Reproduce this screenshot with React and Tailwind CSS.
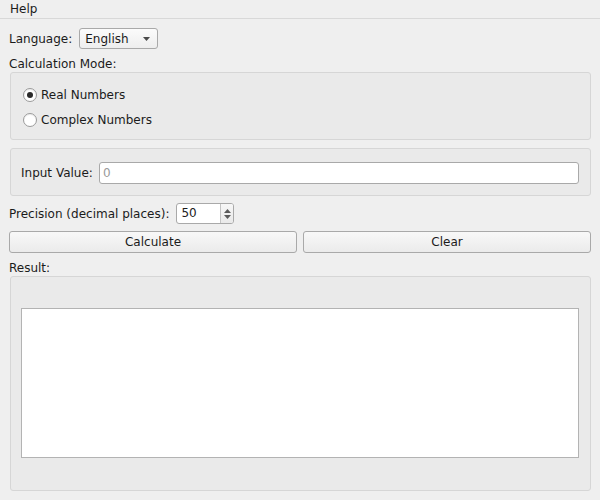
import React, { useState } from "react";

const Radio = ({ checked, label, onClick }) => (
  <div className="flex items-center h-[20px] cursor-default" onClick={onClick}>
    <span className="w-[14px] h-[14px] rounded-full border border-[#9a9a9a] bg-white flex items-center justify-center shadow-[inset_0_1px_1px_rgba(0,0,0,0.08)]">
      {checked && <span className="w-[6px] h-[6px] rounded-full bg-[#2b2b2b]" />}
    </span>
    <span className="ml-[4px]">{label}</span>
  </div>
);

const Group = ({ className = "", children }) => (
  <div className={`ml-[1px] w-[581px] rounded-[3px] border border-[#d6d6d6] bg-[#eaeaea] ${className}`}>
    {children}
  </div>
);

const Button = ({ children, onClick }) => (
  <button
    onClick={onClick}
    className="flex-1 h-[22px] rounded-[3px] border border-[#a9a9a9] bg-gradient-to-b from-[#f8f8f8] to-[#ebebeb] text-[12px] leading-[20px] text-[#1b1b1b]"
  >
    {children}
  </button>
);

export default function App() {
  const [mode, setMode] = useState("real");
  const [value, setValue] = useState("");
  const [precision, setPrecision] = useState(50);
  const [result, setResult] = useState("");

  return (
    <div className="w-[600px] h-[500px] bg-[#efefef] text-[12px] text-[#1b1b1b] font-['DejaVu_Sans',sans-serif] overflow-hidden">
      <div className="h-[19px] border-b border-[#d8d8d8] flex items-center">
        <span className="px-[10px] leading-[17px]">Help</span>
      </div>

      <div className="px-[9px] flex flex-col">
        <div className="flex items-center mt-[9px] h-[21px]">
          <span>Language:</span>
          <div className="ml-[7px] w-[79px] h-[21px] rounded-[3px] border border-[#a9a9a9] bg-gradient-to-b from-[#fbfbfb] to-[#eeeeee] flex items-center justify-between pl-[5px] pr-[5px]">
            <span>English</span>
            <svg width="7" height="4" viewBox="0 0 7 4" className="mr-[2px]">
              <path d="M0 0 L7 0 L3.5 4 Z" fill="#4a4a4a" />
            </svg>
          </div>
        </div>

        <div className="mt-[8px] h-[14px] leading-[14px]">Calculation Mode:</div>

        <Group className="mt-[1px] h-[68px] pl-[12px] pt-[12px]">
          <Radio checked={mode === "real"} label="Real Numbers" onClick={() => setMode("real")} />
          <div className="h-[5px]" />
          <Radio checked={mode === "complex"} label="Complex Numbers" onClick={() => setMode("complex")} />
        </Group>

        <Group className="mt-[8px] h-[48px] flex items-start pt-[13px] pl-[10px] pr-[11px]">
          <span className="leading-[22px] text-[#1b1b1b]">Input Value:</span>
          <input
            value={value}
            onChange={(e) => setValue(e.target.value)}
            placeholder="0"
            className="ml-[6px] flex-1 h-[22px] rounded-[3px] border border-[#a9a9a9] bg-white px-[3px] text-[12px] outline-none placeholder:text-[#9a9a9a]"
          />
        </Group>

        <div className="flex items-center mt-[7px] h-[21px]">
          <span>Precision (decimal places):</span>
          <div className="ml-[7px] w-[58px] h-[21px] rounded-[3px] border border-[#a9a9a9] bg-white flex">
            <span className="flex-1 pl-[4px] leading-[19px]">{precision}</span>
            <div className="w-[13px] border-l border-[#c4c4c4] bg-gradient-to-b from-[#f7f7f7] to-[#e9e9e9] rounded-r-[2px] flex flex-col items-center justify-center gap-[2px]">
              <svg width="7" height="4" viewBox="0 0 7 4">
                <path d="M0 4 L7 4 L3.5 0 Z" fill="#5a5a5a" />
              </svg>
              <svg width="7" height="4" viewBox="0 0 7 4">
                <path d="M0 0 L7 0 L3.5 4 Z" fill="#5a5a5a" />
              </svg>
            </div>
          </div>
        </div>

        <div className="flex gap-[6px] mt-[7px]">
          <Button onClick={() => setResult(value ? String(Math.sqrt(Number(value))) : "")}>Calculate</Button>
          <Button onClick={() => { setValue(""); setResult(""); }}>Clear</Button>
        </div>

        <div className="mt-[8px] h-[14px] leading-[14px]">Result:</div>

        <Group className="mt-[1px] h-[215px] pt-[31px] pl-[10px] pr-[11px]">
          <div className="h-[150px] border border-[#b3b3b3] bg-white p-[3px]">{result}</div>
        </Group>
      </div>
    </div>
  );
}
